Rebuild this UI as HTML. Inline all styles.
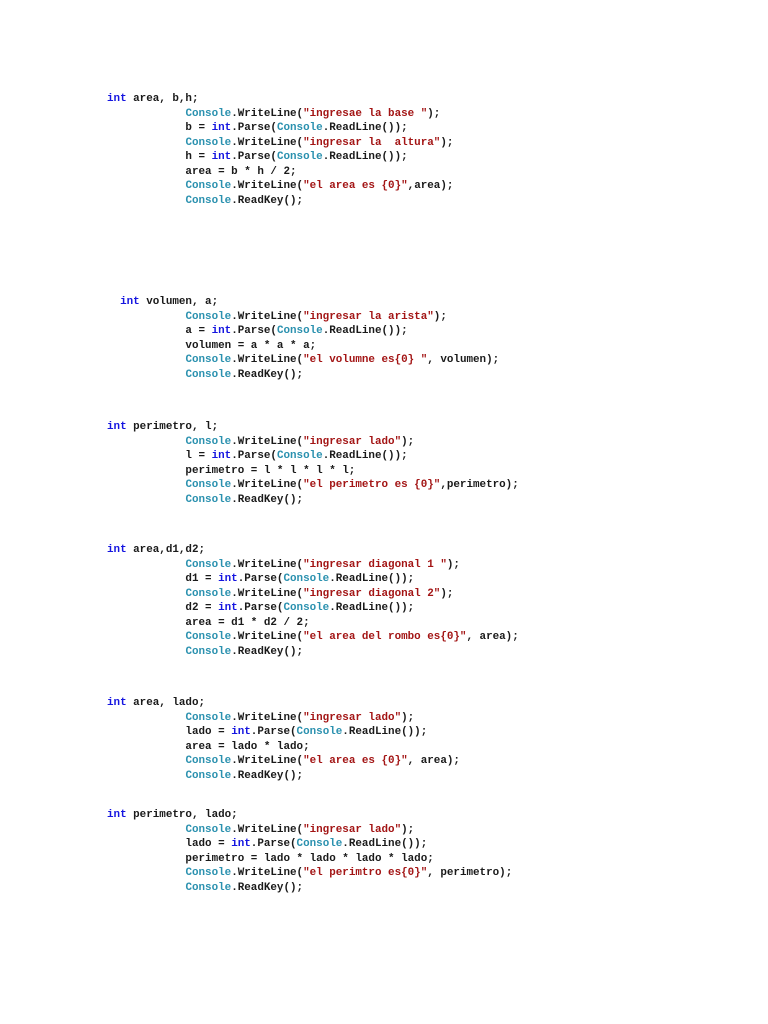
<!DOCTYPE html>
<html><head><meta charset="utf-8"><style>
body{margin:0;width:768px;height:1024px;background:#fff;position:relative;overflow:hidden}
pre{position:absolute;left:107px;margin:0;font-family:"Liberation Mono",monospace;font-size:10.9px;line-height:14.5px;color:#1a1a1a;font-weight:bold;letter-spacing:0}
.k{color:#1515e0}.c{color:#2b91af}.s{color:#a31515}
</style></head><body>
<pre style="top:92px"><span class="k">int</span> area, b,h;
            <span class="c">Console</span>.WriteLine(<span class="s">"ingresae la base "</span>);
            b = <span class="k">int</span>.Parse(<span class="c">Console</span>.ReadLine());
            <span class="c">Console</span>.WriteLine(<span class="s">"ingresar la  altura"</span>);
            h = <span class="k">int</span>.Parse(<span class="c">Console</span>.ReadLine());
            area = b * h / 2;
            <span class="c">Console</span>.WriteLine(<span class="s">"el area es {0}"</span>,area);
            <span class="c">Console</span>.ReadKey();</pre>
<pre style="top:295px">  <span class="k">int</span> volumen, a;
            <span class="c">Console</span>.WriteLine(<span class="s">"ingresar la arista"</span>);
            a = <span class="k">int</span>.Parse(<span class="c">Console</span>.ReadLine());
            volumen = a * a * a;
            <span class="c">Console</span>.WriteLine(<span class="s">"el volumne es{0} "</span>, volumen);
            <span class="c">Console</span>.ReadKey();</pre>
<pre style="top:420px"><span class="k">int</span> perimetro, l;
            <span class="c">Console</span>.WriteLine(<span class="s">"ingresar lado"</span>);
            l = <span class="k">int</span>.Parse(<span class="c">Console</span>.ReadLine());
            perimetro = l * l * l * l;
            <span class="c">Console</span>.WriteLine(<span class="s">"el perimetro es {0}"</span>,perimetro);
            <span class="c">Console</span>.ReadKey();</pre>
<pre style="top:543px"><span class="k">int</span> area,d1,d2;
            <span class="c">Console</span>.WriteLine(<span class="s">"ingresar diagonal 1 "</span>);
            d1 = <span class="k">int</span>.Parse(<span class="c">Console</span>.ReadLine());
            <span class="c">Console</span>.WriteLine(<span class="s">"ingresar diagonal 2"</span>);
            d2 = <span class="k">int</span>.Parse(<span class="c">Console</span>.ReadLine());
            area = d1 * d2 / 2;
            <span class="c">Console</span>.WriteLine(<span class="s">"el area del rombo es{0}"</span>, area);
            <span class="c">Console</span>.ReadKey();</pre>
<pre style="top:696px"><span class="k">int</span> area, lado;
            <span class="c">Console</span>.WriteLine(<span class="s">"ingresar lado"</span>);
            lado = <span class="k">int</span>.Parse(<span class="c">Console</span>.ReadLine());
            area = lado * lado;
            <span class="c">Console</span>.WriteLine(<span class="s">"el area es {0}"</span>, area);
            <span class="c">Console</span>.ReadKey();</pre>
<pre style="top:808px"><span class="k">int</span> perimetro, lado;
            <span class="c">Console</span>.WriteLine(<span class="s">"ingresar lado"</span>);
            lado = <span class="k">int</span>.Parse(<span class="c">Console</span>.ReadLine());
            perimetro = lado * lado * lado * lado;
            <span class="c">Console</span>.WriteLine(<span class="s">"el perimtro es{0}"</span>, perimetro);
            <span class="c">Console</span>.ReadKey();</pre>
</body></html>
